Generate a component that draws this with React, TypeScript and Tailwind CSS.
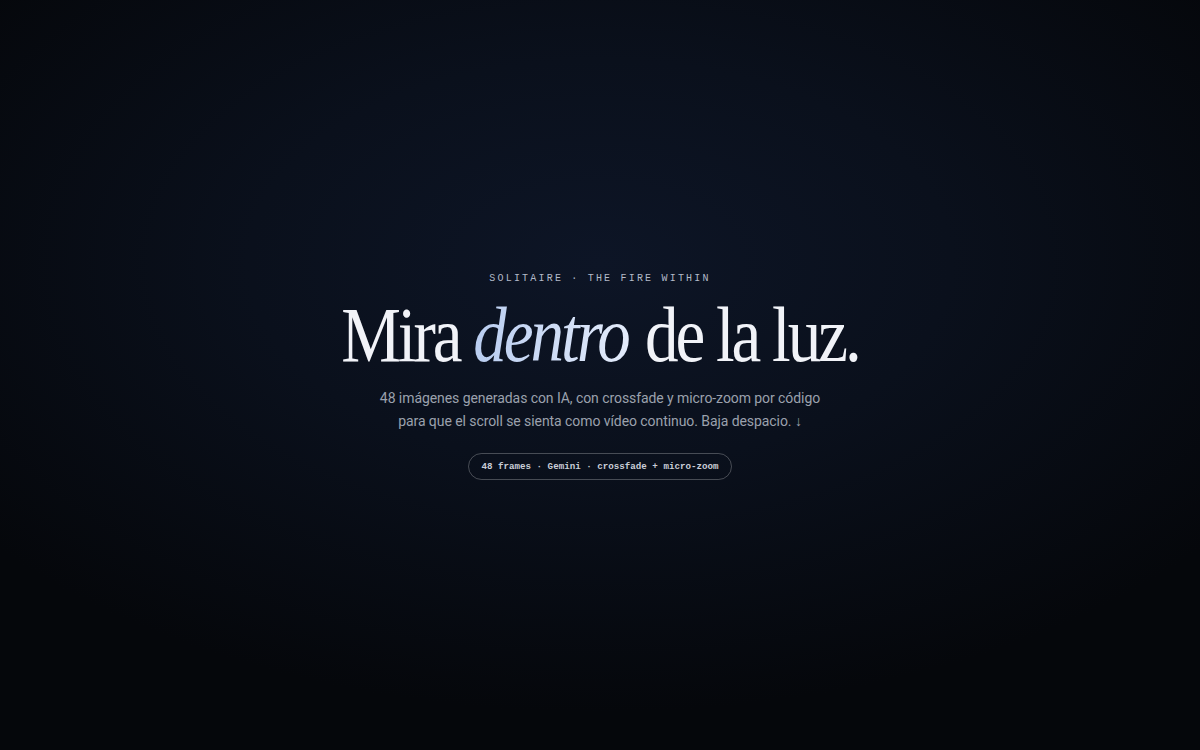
import React from 'react';

const App: React.FC = () => {
  return (
    <div className="relative w-full h-[750px] overflow-hidden bg-[#05070b]">
      <div className="absolute inset-0 bg-[radial-gradient(ellipse_65%_60%_at_50%_35%,#0d1526_0%,#0a101c_45%,#05070b_100%)]" />
      <div className="relative flex h-full flex-col items-center pt-[271px]">
        <p className="font-['Liberation_Mono',monospace] text-[10px] uppercase tracking-[0.22em] text-[#b3bac9]">
          Solitaire · The Fire Within
        </p>
        <h1 className="mt-[9px] font-['Liberation_Serif',serif] text-[78px] leading-[80px] tracking-[-0.045em] text-[#f1f3f8] scale-x-[0.86]">
          Mira{' '}
          <em className="italic bg-gradient-to-r from-[#b9cdf0] to-[#e4ecfb] bg-clip-text text-transparent pr-1">dentro</em>{' '}
          de la luz.
        </h1>
        <p className="mt-[12px] text-center font-['Roboto',sans-serif] text-[14px] leading-[23px] tracking-[-0.005em] text-[#9ba1ad]">
          48 imágenes generadas con IA, con crossfade y micro-zoom por código
          <br />
          para que el scroll se sienta como vídeo continuo. Baja despacio. ↓
        </p>
        <div className="mt-[20px] flex h-[27px] items-center rounded-full border border-white/25 px-[12px] font-['Liberation_Mono',monospace] text-[9.2px] font-bold text-[#c9cdd7]">
          48 frames · Gemini · crossfade + micro-zoom
        </div>
      </div>
    </div>
  );
};

export default App;
